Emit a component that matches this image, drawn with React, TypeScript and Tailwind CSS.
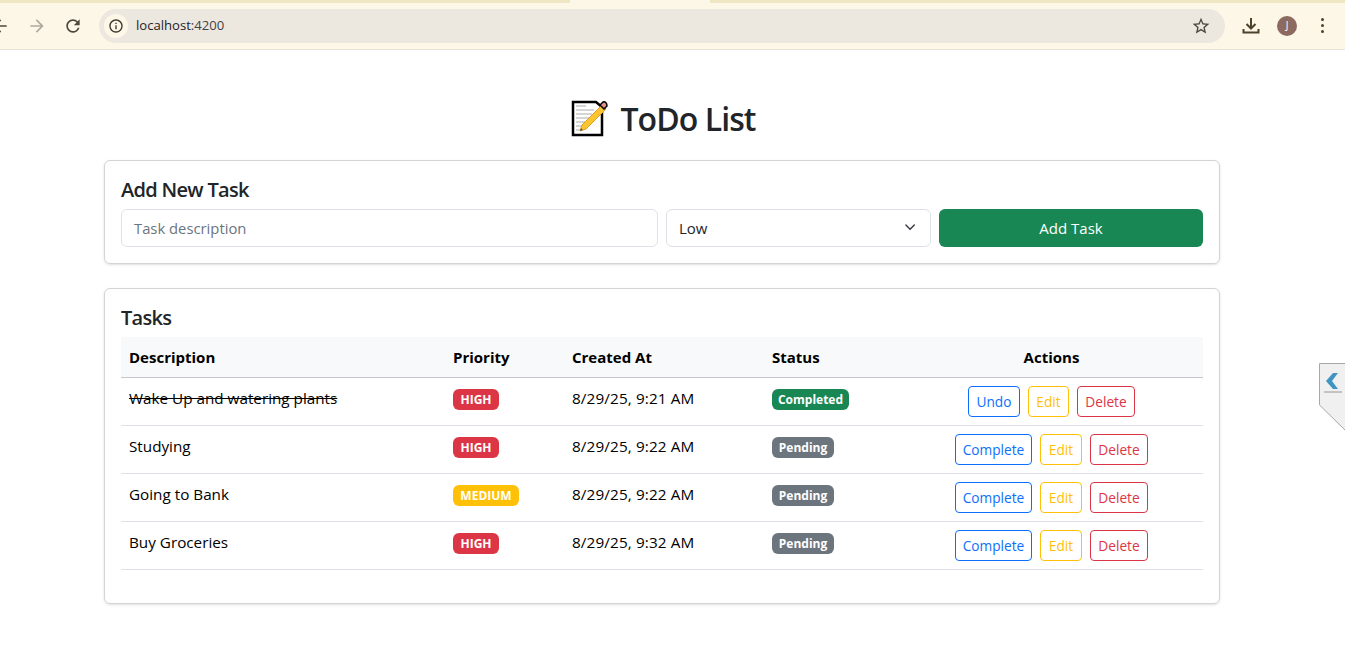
const tasks = [
  { description: 'Wake Up and watering plants', priority: 'HIGH', createdAt: '8/29/25, 9:21 AM', status: 'Completed' },
  { description: 'Studying', priority: 'HIGH', createdAt: '8/29/25, 9:22 AM', status: 'Pending' },
  { description: 'Going to Bank', priority: 'MEDIUM', createdAt: '8/29/25, 9:22 AM', status: 'Pending' },
  { description: 'Buy Groceries', priority: 'HIGH', createdAt: '8/29/25, 9:32 AM', status: 'Pending' },
];

const ChromeIcon = ({ d, className }: { d: string; className: string }) => (
  <svg viewBox="0 0 24 24" className={className} fill="currentColor">
    <path d={d} />
  </svg>
);

const BrowserBar = () => {
  return (
    <div className="h-[50px] bg-[#fdf7e8] border-b border-[#e8e3d6] flex flex-col shrink-0">
      {/* tab strip */}
      <div className="h-[3px] flex">
        <div className="w-[570px] bg-[#efe7c4]" />
        <div className="w-[140px]" />
        <div className="flex-1 bg-[#efe7c4]" />
      </div>
      <div className="flex-1 flex items-center pb-[1px]">
        <ChromeIcon
          className="w-5 h-5 -ml-[10px] text-[#4d483b]"
          d="M20 11H7.83l5.59-5.59L12 4l-8 8 8 8 1.41-1.41L7.83 13H20v-2z"
        />
        <ChromeIcon
          className="w-5 h-5 ml-[17px] text-[#aeaa9e]"
          d="M12 4l-1.41 1.41L16.17 11H4v2h12.17l-5.58 5.59L12 20l8-8z"
        />
        <ChromeIcon
          className="w-5 h-5 ml-[16px] text-[#4d483b]"
          d="M17.65 6.35A7.958 7.958 0 0 0 12 4c-4.42 0-7.99 3.58-7.99 8s3.57 8 7.99 8c3.73 0 6.84-2.55 7.73-6h-2.08A5.99 5.99 0 0 1 12 18c-3.31 0-6-2.69-6-6s2.69-6 6-6c1.66 0 3.14.69 4.22 1.78L13 11h7V4l-2.35 2.35z"
        />
        {/* address bar */}
        <div className="ml-[16px] w-[1126px] h-[34px] rounded-full bg-[#ece7df] flex items-center pl-[5px] pr-[14px]">
          <div className="w-6 h-6 rounded-full bg-[#fdf7e8] flex items-center justify-center">
            <ChromeIcon
              className="w-4 h-4 text-[#39352b]"
              d="M11 7h2v2h-2zm0 4h2v6h-2zm1-9C6.48 2 2 6.48 2 12s4.48 10 10 10 10-4.48 10-10S17.52 2 12 2zm0 18c-4.41 0-8-3.59-8-8s3.59-8 8-8 8 3.59 8 8-3.59 8-8 8z"
            />
          </div>
          <span className="ml-2 text-[13.1px] text-[#1f2328]">
            localhost<span className="text-[#3f4246]">:4200</span>
          </span>
          <ChromeIcon
            className="w-5 h-5 ml-auto text-[#4d483b]"
            d="M22 9.24l-7.19-.62L12 2 9.19 8.63 2 9.24l5.46 4.73L5.82 21 12 17.27 18.18 21l-1.63-7.03L22 9.24zM12 15.4l-3.76 2.27 1-4.28-3.32-2.88 4.38-.38L12 6.1l1.71 4.04 4.38.38-3.32 2.88 1 4.28L12 15.4z"
          />
        </div>
        <svg viewBox="0 0 20 20" className="w-5 h-5 ml-4 text-[#4d432a]" fill="none" stroke="currentColor" strokeWidth="2">
          <path d="M10 2v10M5.5 8l4.5 4.5L14.500 8M2.500 13v3.500h15V13" />
        </svg>
        <div className="w-5 h-5 ml-4 rounded-full bg-[#8c6a5f] text-white text-[10px] flex items-center justify-center">
          J
        </div>
        <div className="ml-[24px] flex flex-col gap-[3px]">
          <div className="w-[3px] h-[3px] rounded-full bg-[#4d432a]" />
          <div className="w-[3px] h-[3px] rounded-full bg-[#4d432a]" />
          <div className="w-[3px] h-[3px] rounded-full bg-[#4d432a]" />
        </div>
      </div>
    </div>
  );
};

const MemoIcon = () => (
  <svg viewBox="0 0 38 38" className="w-[38px] h-[38px]">
    <path d="M2 2h23l6 5v28H2z" fill="#fff" stroke="#000" strokeWidth="2.500" />
    <path d="M5 6h10M5 10h18M5 14h16M5 18h14M5 22h12M5 26h8M5 30h6" stroke="#c8c8c8" strokeWidth="1.500" />
    <path d="M9 31l2-6L31 5l4 4-20 20z" fill="#fbc531" stroke="#e0a020" strokeWidth="1" />
    <path d="M29 5l3-3c2-1 4 1 4 4l-3 3z" fill="#e88f8f" stroke="#000" strokeWidth="1.500" />
    <path d="M9 31l1-3 2 2z" fill="#555" />
  </svg>
);

const SideTab = () => (
  <svg viewBox="0 0 26 68" className="absolute right-0 top-[363px] w-[26px] h-[68px]">
    <path d="M0.500 0.500H26V67L0.500 42z" fill="#f0f0f0" />
    <path d="M26 0.500H0.500V42L26 67" fill="none" stroke="#a8a8a8" />
    <path d="M14 10l-7 8 7 8h5l-6-8 6-8z" fill="#3f94c4" />
    <path d="M5 29h18" stroke="#b5b5b5" strokeWidth="1.500" />
  </svg>
);

const Badge = ({ label }: { label: string }) => {
  const styles: Record<string, string> = {
    HIGH: 'bg-[#dc3545] w-[46px]',
    MEDIUM: 'bg-[#ffc107] w-[66px]',
    Completed: 'bg-[#198754] w-[77px]',
    Pending: 'bg-[#6c757d] w-[62px]',
  };
  return (
    <span
      className={`${styles[label]} mt-[3px] h-[21px] pt-[1px] rounded-[6px] text-white text-[12px] font-bold flex items-center justify-center`}
    >
      {label}
    </span>
  );
};

const ActionButton = ({ label, className }: { label: string; className: string }) => (
  <button className={`${className} h-[31px] pt-[2px] border rounded-[4px] text-[13.7px] bg-white`}>{label}</button>
);

const App = () => {
  return (
    <div className="relative h-[646px] overflow-hidden bg-white flex flex-col font-['Open_Sans','Noto_Sans',sans-serif]">
      <BrowserBar />
      <SideTab />

      <main className="ml-[104px] w-[1116px]">
        <h1 className="mt-[50px] h-[38px] pl-[3px] flex items-center justify-center gap-[11px] text-[32px] font-semibold text-[#212529] tracking-[-0.93px]">
          <MemoIcon />
          ToDo List
        </h1>

        {/* 추가 폼 */}
        <section className="mt-[22px] border border-[#d3d4d5] rounded-[6px] shadow-sm p-4">
          <h2 className="text-[20px] leading-[26px] font-semibold text-[#212529] tracking-[-0.7px] mb-[6px]">Add New Task</h2>
          <div className="grid grid-cols-[537px_265px_264px] gap-2">
            <div className="h-[38px] border border-[#dee2e6] rounded-[6px] px-3 flex items-center text-[14.8px] text-[#6c757d]">
              Task description
            </div>
            <div className="h-[38px] border border-[#dee2e6] rounded-[6px] px-3 flex items-center justify-between text-[15px] text-[#212529]">
              Low
              <svg viewBox="0 0 16 16" className="w-4 h-4" fill="none" stroke="#343a40" strokeWidth="2" strokeLinecap="round" strokeLinejoin="round">
                <path d="M2 5l6 6 6-6" transform="translate(2.500 1.500) scale(0.7)" />
              </svg>
            </div>
            <button className="h-[38px] rounded-[6px] bg-[#198754] text-white text-[15px]">Add Task</button>
          </div>
        </section>

        {/* 목록 */}
        <section className="mt-6 border border-[#d3d4d5] rounded-[6px] shadow-sm px-4 pt-4 pb-[33px]">
          <h2 className="text-[20px] leading-[26px] font-semibold text-[#212529] tracking-[-0.7px] mb-[6px]">Tasks</h2>
          <table className="w-[1082px] table-fixed text-[15px] text-black">
            <colgroup>
              <col className="w-[324px]" />
              <col className="w-[119px]" />
              <col className="w-[200px]" />
              <col className="w-[136px]" />
              <col className="w-[303px]" />
            </colgroup>
            <thead>
              <tr className="h-[40px] bg-[#f8f9fa] border-b border-[#c4c6c9] font-bold">
                <th className="px-2 text-left">Description</th>
                <th className="px-2 text-left">Priority</th>
                <th className="px-2 text-left">Created At</th>
                <th className="px-2 text-left">Status</th>
                <th className="px-2 text-center">Actions</th>
              </tr>
            </thead>
            <tbody>
              {tasks.map((task, index) => {
                const done = task.status === 'Completed';
                return (
                  <tr key={index} className="h-[48px] border-b border-[#dee2e6] align-top">
                    <td className={`px-2 py-2 text-[15.25px] leading-[24px] ${done ? 'line-through' : ''}`}>{task.description}</td>
                    <td className="px-2 py-2">
                      <div className="flex">
                        <Badge label={task.priority} />
                      </div>
                    </td>
                    <td className="px-2 py-2 text-[15.3px] leading-[24px] tracking-[0.12px]">{task.createdAt}</td>
                    <td className="px-2 py-2">
                      <div className="flex">
                        <Badge label={task.status} />
                      </div>
                    </td>
                    <td className="px-2 py-2">
                      <div className="flex justify-center gap-2">
                        <ActionButton
                          label={done ? 'Undo' : 'Complete'}
                          className={`${done ? 'w-[52px]' : 'w-[77px]'} border-[#0d6efd] text-[#0d6efd]`}
                        />
                        <ActionButton label="Edit" className={`${done ? 'w-[41px]' : 'w-[42px]'} border-[#ffc107] text-[#ffc107]`} />
                        <ActionButton label="Delete" className="w-[58px] border-[#dc3545] text-[#dc3545]" />
                      </div>
                    </td>
                  </tr>
                );
              })}
            </tbody>
          </table>
        </section>
      </main>
    </div>
  );
};

export default App;
